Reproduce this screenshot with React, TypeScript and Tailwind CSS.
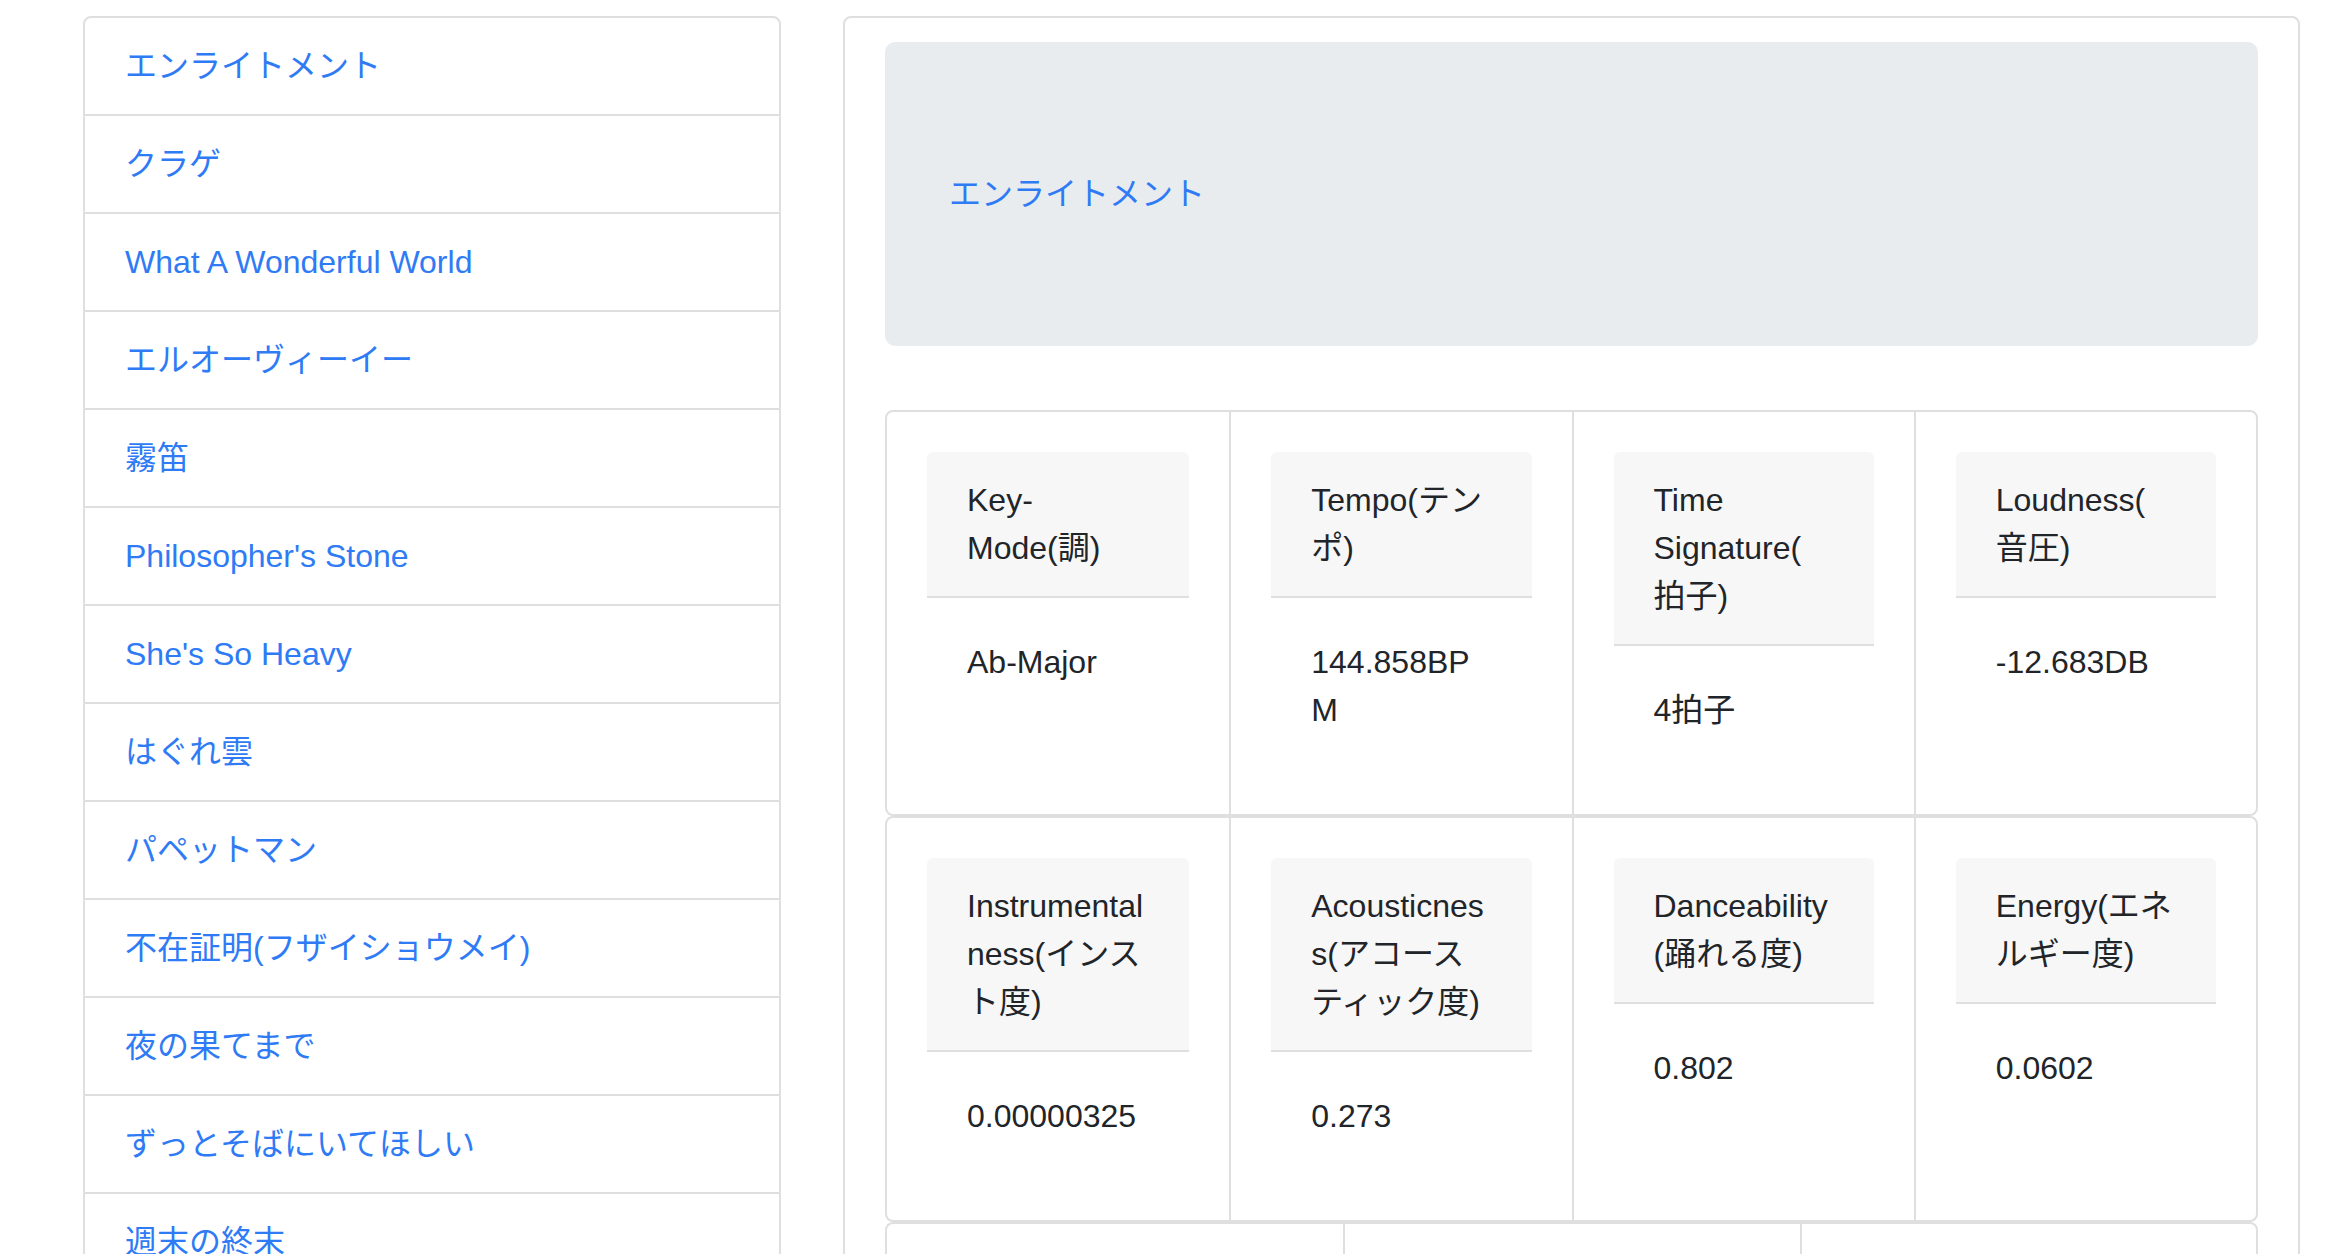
import React from 'react';

const songs = [
  'エンライトメント',
  'クラゲ',
  'What A Wonderful World',
  'エルオーヴィーイー',
  '霧笛',
  "Philosopher's Stone",
  "She's So Heavy",
  'はぐれ雲',
  'パペットマン',
  '不在証明(フザイショウメイ)',
  '夜の果てまで',
  'ずっとそばにいてほしい',
  '週末の終末',
];

type Feature = { label: string[]; value: string[] };

const rows: Feature[][] = [
  [
    { label: ['Key-', 'Mode(調)'], value: ['Ab-Major'] },
    { label: ['Tempo(テン', 'ポ)'], value: ['144.858BP', 'M'] },
    { label: ['Time', 'Signature(', '拍子)'], value: ['4拍子'] },
    { label: ['Loudness(', '音圧)'], value: ['-12.683DB'] },
  ],
  [
    { label: ['Instrumental', 'ness(インス', 'ト度)'], value: ['0.00000325'] },
    { label: ['Acousticnes', 's(アコース', 'ティック度)'], value: ['0.273'] },
    { label: ['Danceability', '(踊れる度)'], value: ['0.802'] },
    { label: ['Energy(エネ', 'ルギー度)'], value: ['0.0602'] },
  ],
  [
    { label: ['Valence(明るさ)'], value: ['0.327'] },
    { label: ['Liveness(ライブ感)'], value: ['0.108'] },
    { label: ['Speechiness(スピーチ度)'], value: ['0.0291'] },
  ],
];

function FeatureCell({ f, first }: { f: Feature; first: boolean }) {
  return (
    <div className={`p-[40px] ${first ? '' : 'border-l-2 border-[#dfdfdf]'}`}>
      <div className="rounded-t-[6px] bg-[#f7f7f7] border-b-2 border-[#dfdfdf] px-[40px] py-[24px]">
        {f.label.map((l, i) => (
          <span key={i} className="block whitespace-nowrap">{l}</span>
        ))}
      </div>
      <div className="p-[40px]">
        {f.value.map((v, i) => (
          <span key={i} className="block whitespace-nowrap">{v}</span>
        ))}
      </div>
    </div>
  );
}

export default function App() {
  return (
    <div className="min-h-screen bg-white font-['Liberation_Sans','Noto_Sans_CJK_JP',sans-serif] text-[32px] leading-[48px] text-[#212529]">
      <div className="flex items-start pt-[16px] pl-[83px]">
        {/* Song list */}
        <div className="w-[698px] shrink-0 border-2 border-[#dfdfdf] rounded-t-[8px] divide-y-2 divide-[#dfdfdf]">
          {songs.map((s) => (
            <div key={s} className="px-[40px] py-[24px] text-[#2f7bf5]">
              {s}
            </div>
          ))}
        </div>

        {/* Detail */}
        <div className="ml-[62px] w-[1457px] shrink-0 border-2 border-[#dfdfdf] rounded-[8px] px-[40px] pt-[24px] pb-[40px]">
          <div className="rounded-[10px] bg-[#e9ecef] px-[64px] py-[128px] mb-[64px] text-[#2f7bf5]">
            エンライトメント
          </div>

          {rows.map((row, ri) => (
            <div
              key={ri}
              className={`border-2 border-[#dfdfdf] rounded-[8px] grid ${row.length === 4 ? 'grid-cols-4' : 'grid-cols-3'}`}
            >
              {row.map((f, i) => (
                <FeatureCell key={i} f={f} first={i === 0} />
              ))}
            </div>
          ))}
        </div>
      </div>
    </div>
  );
}
